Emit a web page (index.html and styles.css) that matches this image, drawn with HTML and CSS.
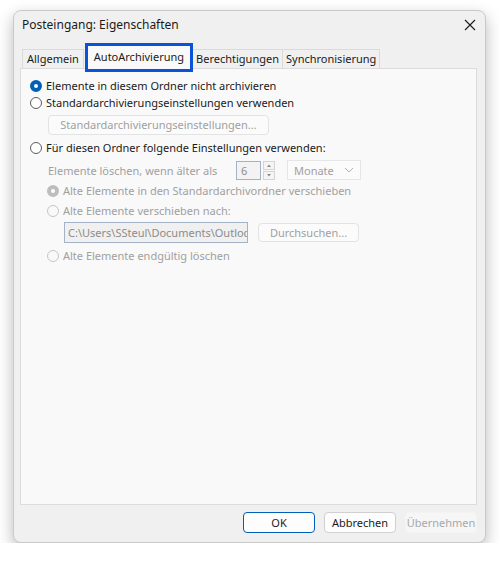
FILE: index.html
```html
<!DOCTYPE html>
<html lang="de">
<head>
    <meta charset="UTF-8">
    <title>Posteingang: Eigenschaften</title>
    <link rel="stylesheet" href="styles.css">
</head>
<body>

    <div class="window">
        <div class="titlebar">
            <span class="title">Posteingang: Eigenschaften</span>
            <svg class="close" width="12" height="12" viewBox="0 0 12 12">
                <path d="M1 1 L11 11 M11 1 L1 11" stroke="#1a1a1a" stroke-width="1.1" fill="none"/>
            </svg>
        </div>

        <div class="tabs">
            <div class="tab">Allgemein</div>
            <div class="tab active">AutoArchivierung</div>
            <div class="tab">Berechtigungen</div>
            <div class="tab">Synchronisierung</div>
        </div>

        <div class="panel">
            <div class="row r1">
                <span class="radio checked"></span>
                <span>Elemente in diesem Ordner nicht archivieren</span>
            </div>
            <div class="row r2">
                <span class="radio"></span>
                <span>Standardarchivierungseinstellungen verwenden</span>
            </div>
            <div class="btn wide disabled">Standardarchivierungseinstellungen...</div>
            <div class="row r3">
                <span class="radio"></span>
                <span>Für diesen Ordner folgende Einstellungen verwenden:</span>
            </div>

            <div class="age-row">
                <span class="age-label">Elemente löschen, wenn älter als</span>
                <span class="spin-value">6</span>
                <span class="spin-arrows">
                    <svg width="12" height="19" viewBox="0 0 12 19">
                        <rect x="0.5" y="0.5" width="11" height="8" fill="#f5f5f5" stroke="#d4d4d4"/>
                        <rect x="0.5" y="10.5" width="11" height="8" fill="#f5f5f5" stroke="#d4d4d4"/>
                        <path d="M4 6 L6 3.5 L8 6 Z" fill="#8a8a8a"/>
                        <path d="M4 13 L6 15.5 L8 13 Z" fill="#8a8a8a"/>
                    </svg>
                </span>
                <span class="combo">
                    <span>Monate</span>
                    <svg width="10" height="6" viewBox="0 0 10 6">
                        <path d="M1 1 L5 5 L9 1" stroke="#b0b0b0" fill="none"/>
                    </svg>
                </span>
            </div>

            <div class="row sub r4">
                <span class="radio dis checked"></span>
                <span>Alte Elemente in den Standardarchivordner verschieben</span>
            </div>
            <div class="row sub r5">
                <span class="radio dis"></span>
                <span>Alte Elemente verschieben nach:</span>
            </div>
            <div class="path-row">
                <span class="path">C:\Users\SSteul\Documents\Outloc</span>
                <span class="btn browse disabled">Durchsuchen...</span>
            </div>
            <div class="row sub r6">
                <span class="radio dis"></span>
                <span>Alte Elemente endgültig löschen</span>
            </div>
        </div>

        <div class="footer">
            <div class="btn foot default">OK</div>
            <div class="btn foot">Abbrechen</div>
            <div class="btn foot off">Übernehmen</div>
        </div>
    </div>

</body>
</html>
```

FILE: styles.css
```css
body {
    margin: 0;
    padding: 10px 0 0 13px;
    background-color: #ffffff;
    font-family: "Noto Sans", sans-serif;
    font-size: 11px;
    color: #1a1a1a;
}

.window {
    width: 471px;
    height: 531px;
    background-color: #f0f0f0;
    border: 1px solid #c9c9c9;
    border-radius: 8px;
    box-shadow: 0 6px 16px rgba(0, 0, 0, 0.28);
    display: flex;
    flex-direction: column;
}

.titlebar {
    height: 27px;
    display: flex;
    align-items: center;
    justify-content: space-between;
    padding: 0 9px 0 8px;
}

.title {
    font-size: 12px;
}

.tabs {
    display: flex;
    margin: 10px 0 0 8px;
    height: 20px;
    align-items: flex-end;
}

.tab {
    height: 19px;
    line-height: 18px;
    padding: 0 3px;
    border: 1px solid #dadada;
    border-bottom: none;
    border-left: none;
    box-sizing: border-box;
}

.tab:first-child {
    border-left: 1px solid #dadada;
    padding: 0 4px;
}

.tab.active {
    height: 29px;
    line-height: 22px;
    padding: 0 6px;
    margin-left: 1px;
    margin-bottom: -4px;
    border: 3px solid #0b52d8;
    background-color: #f9f9f9;
    position: relative;
    z-index: 1;
}

.panel {
    height: 437px;
    margin: 0 8px 0 6px;
    background-color: #f9f9f9;
    border: 1px solid #dcdcdc;
    padding: 8px 9px 0 9px;
    box-sizing: border-box;
}

.row {
    display: flex;
    align-items: center;
    height: 17px;
    gap: 4px;
}

.r3 { margin-top: 4px; }
.r4 { margin-top: 2px; }
.r5 { margin-top: 3px; }
.r6 { margin-top: 4px; }

.sub {
    margin-left: 17px;
    color: #a0a0a0;
}

.radio {
    width: 10px;
    height: 10px;
    border: 1px solid #5c5c5c;
    border-radius: 50%;
    background-color: #ffffff;
    flex-shrink: 0;
}

.radio.checked {
    width: 4px;
    height: 4px;
    border: 4px solid #005fb8;
    background-color: #ffffff;
}

.radio.dis {
    border-color: #c6c6c6;
    background-color: #f9f9f9;
}

.radio.dis.checked {
    border-color: #bdbdbd;
    background-color: #ffffff;
}

.btn {
    box-sizing: border-box;
    height: 20px;
    line-height: 18px;
    text-align: center;
    border: 1px solid #d0d0d0;
    border-radius: 4px;
    background-color: #fdfdfd;
}

.btn.disabled {
    color: #a0a0a0;
    border-color: #e3e3e3;
    background-color: #fbfbfb;
}

.wide {
    width: 221px;
    margin: 4px 0 0 18px;
}

.age-row {
    display: flex;
    align-items: center;
    height: 20px;
    margin: 4px 0 0 18px;
    color: #a0a0a0;
}

.age-label {
    width: 188px;
}

.spin-value {
    box-sizing: border-box;
    width: 25px;
    height: 19px;
    line-height: 17px;
    padding-left: 4px;
    border: 1px solid #a3b2c6;
    background-color: #f3f3f3;
    color: #8c8c8c;
}

.spin-arrows {
    display: flex;
    margin-left: 2px;
}

.combo {
    box-sizing: border-box;
    width: 74px;
    height: 20px;
    margin-left: 12px;
    padding: 0 6px;
    display: flex;
    align-items: center;
    justify-content: space-between;
    border: 1px solid #e6e6e6;
    background-color: #fbfbfb;
}

.path-row {
    display: flex;
    align-items: center;
    height: 21px;
    margin: 3px 0 0 34px;
    gap: 10px;
}

.path {
    box-sizing: border-box;
    width: 184px;
    height: 21px;
    line-height: 19px;
    padding-left: 3px;
    border: 1px solid #a3b2c6;
    background-color: #f0f0f0;
    color: #8c8c8c;
    white-space: nowrap;
    overflow: hidden;
}

.browse {
    width: 101px;
    height: 19px;
    line-height: 17px;
}

.footer {
    display: flex;
    justify-content: flex-end;
    gap: 9px;
    padding: 7px 8px 0 0;
}

.foot {
    width: 72px;
    height: 21px;
    line-height: 19px;
}

.default {
    border-color: #005fb8;
}

.off {
    color: #a8a8a8;
    border-color: #f3f3f3;
    background-color: #f6f6f6;
}
```
